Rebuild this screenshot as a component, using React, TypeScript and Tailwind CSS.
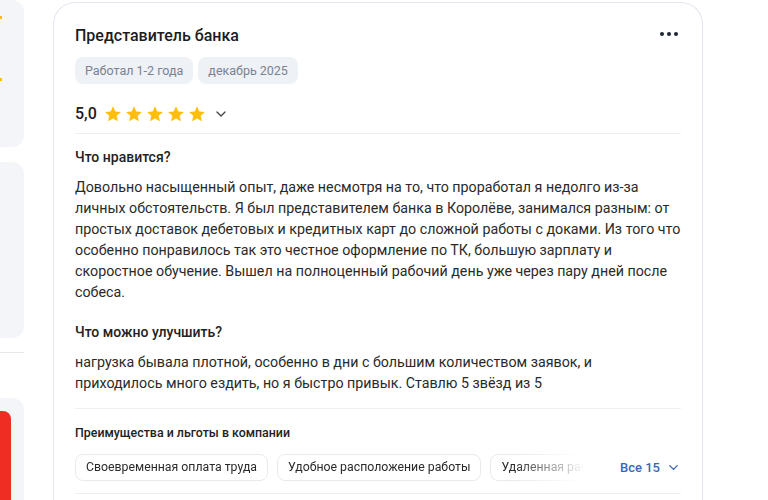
import { ChevronDown } from "lucide-react";

const likes =
  "Довольно насыщенный опыт, даже несмотря на то, что проработал я недолго из-за личных обстоятельств. Я был представителем банка в Королёве, занимался разным: от простых доставок дебетовых и кредитных карт до сложной работы с доками. Из того что особенно понравилось так это честное оформление по ТК, большую зарплату и скоростное обучение. Вышел на полноценный рабочий день уже через пару дней после собеса.";

const improve =
  "нагрузка бывала плотной, особенно в дни с большим количеством заявок, и приходилось много ездить, но я быстро привык. Ставлю 5 звёзд из 5";

const benefits = [
  "Своевременная оплата труда",
  "Удобное расположение работы",
  "Удаленная работа",
];

function Star() {
  return (
    <svg width="18" height="18" viewBox="0 0 24 24" className="fill-[#ffbe0b]">
      <path d="M12 1.8l3.1 6.9 7.4.7-5.6 5 1.7 7.4L12 17.9l-6.6 3.9 1.7-7.4-5.6-5 7.4-.7z" />
    </svg>
  );
}

export default function App() {
  return (
    <div
      className="flex h-[500px] w-[768px] overflow-hidden bg-white text-[#222]"
      style={{ fontFamily: "Roboto, 'Noto Sans', sans-serif" }}
    >
      {/* левая колонка, видна только кромка */}
      <div className="flex w-[24px] shrink-0 flex-col">
        <div className="relative h-[147px] rounded-r-[12px] bg-[#f4f5f9]">
          <span className="absolute left-0 top-[16px] h-[3px] w-[2px] bg-[#ffbe0b]" />
          <span className="absolute left-0 top-[78px] h-[3px] w-[2px] bg-[#ffbe0b]" />
        </div>
        <div className="mt-[15px] h-[176px] rounded-r-[12px] bg-[#f4f5f9]" />
        <div className="mt-[14px] h-px bg-[#e6e8ee]" />
        <div className="mt-[45px] flex-1 rounded-tr-[12px] bg-[#f4f5f9] pt-[13px]">
          <div className="h-full w-[11px] rounded-tr-[8px] bg-[#f02d22]" />
        </div>
      </div>

      <div className="ml-[29px] mt-[2px] w-[650px] shrink-0 rounded-t-[22px] border border-b-0 border-[#e3e6ee] px-[21px] pt-[22px]">
        <div className="flex items-start justify-between">
          <h2 className="text-[16px] font-medium leading-[22px] text-[#1c1c1c]">
            Представитель банка
          </h2>
          <div className="mr-[3px] mt-[7px] flex gap-[3px]">
            <span className="h-[4px] w-[4px] rounded-full bg-[#1f2433]" />
            <span className="h-[4px] w-[4px] rounded-full bg-[#1f2433]" />
            <span className="h-[4px] w-[4px] rounded-full bg-[#1f2433]" />
          </div>
        </div>

        <div className="mt-[10px] flex gap-[5px]">
          <span className="rounded-[8px] bg-[#eef1f6] px-[10px] py-[5px] text-[12.5px] leading-[17px] text-[#7b8291]">
            Работал 1-2 года
          </span>
          <span className="rounded-[8px] bg-[#eef1f6] px-[10px] py-[5px] text-[12.5px] leading-[17px] text-[#7b8291]">
            декабрь 2025
          </span>
        </div>

        <div className="mt-[19px] flex items-center border-b border-[#eef0f4] pb-[8px]">
          <span className="mr-[7px] text-[16px] font-medium leading-[22px] text-[#1c1c1c]">5,0</span>
          <div className="flex gap-[3px]">
            <Star />
            <Star />
            <Star />
            <Star />
            <Star />
          </div>
          <ChevronDown className="ml-[7px] text-[#444]" size={16} strokeWidth={2} />
        </div>

        <h3 className="mt-[13px] text-[14px] font-medium leading-[20px]">Что нравится?</h3>
        <p className="mt-[10px] text-[14.25px] leading-[21px] text-[#2a2a2a]">{likes}</p>

        <h3 className="mt-[19px] text-[14px] font-medium leading-[20px]">Что можно улучшить?</h3>
        <p className="mt-[10px] text-[14.25px] leading-[21px] text-[#2a2a2a]">{improve}</p>

        <div className="mt-[14px] border-t border-[#eef0f4] pt-[15px]">
          <h4 className="text-[12.4px] font-medium leading-[18px]">
            Преимущества и льготы в компании
          </h4>
          <div className="mt-[12px] flex items-center border-b border-[#eef0f4] pb-[12px]">
            <div
              className="flex w-[510px] gap-[9px] overflow-hidden"
              style={{
                maskImage: "linear-gradient(to right, black 86%, transparent 100%)",
              }}
            >
              {benefits.map((b) => (
                <span
                  key={b}
                  className="shrink-0 rounded-[8px] border border-[#e8eaf0] px-[10px] py-[4px] text-[12.3px] leading-[17px] text-[#2a2a2a]"
                >
                  {b}
                </span>
              ))}
            </div>
            <button className="ml-[35px] flex items-center gap-[6px] text-[13px] font-medium text-[#3a67b8]">
              Все 15
              <ChevronDown size={15} strokeWidth={2.2} />
            </button>
          </div>
        </div>
      </div>
    </div>
  );
}
